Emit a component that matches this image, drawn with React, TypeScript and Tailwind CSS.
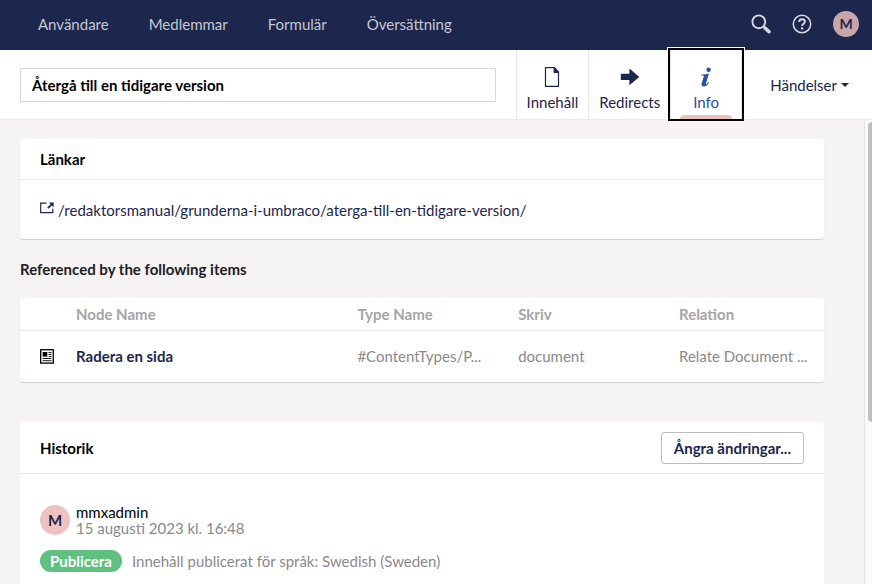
import { useState } from "react";
import clsx from "clsx";

const sections = ["Användare", "Medlemmar", "Formulär", "Översättning"];

const references = [
  {
    name: "Radera en sida",
    type: "#ContentTypes/P...",
    kind: "document",
    relation: "Relate Document ...",
  },
];

function DocumentIcon() {
  return (
    <svg viewBox="0 0 16 20" className="h-5 w-4" fill="none" aria-hidden="true">
      <path d="M1.5 0.7H10.5L14.5 5V19.3H1.5Z" stroke="currentColor" strokeWidth="1.2" />
      <path d="M9.6 0.7H10.5L14.5 5V6H9.6Z" fill="currentColor" />
    </svg>
  );
}

function ArrowIcon() {
  return (
    <svg viewBox="0 0 20 20" className="h-5 w-5" fill="currentColor" aria-hidden="true">
      <path d="M0.8 6.8H9.4V1.6L19.3 9.9L9.4 18.2V13H0.8Z" />
    </svg>
  );
}

function InfoIcon() {
  return (
    <svg viewBox="0 0 12 20" className="h-5 w-3" fill="currentColor" aria-hidden="true">
      <circle cx="8.6" cy="2.8" r="2.2" />
      <path d="M1.4 7.6C4.2 7.5 6.2 7.2 9 6.6L6 16.2C5.6 17.5 6.1 17.6 6.8 17C7.4 16.5 7.9 15.8 8.4 15L9.1 15.4C7.6 18 6 19.4 3.8 19.4C1.8 19.4 1.1 18.2 1.6 16.5L3.8 9.6C4.1 8.6 3.6 8.4 1.4 8.4Z" />
    </svg>
  );
}

function SearchIcon() {
  return (
    <svg viewBox="0 0 20 20" className="h-5 w-5" fill="none" stroke="currentColor" aria-hidden="true">
      <circle cx="7.8" cy="7.8" r="6.4" strokeWidth="1.9" />
      <path d="M12.4 12.4L14 14" strokeWidth="2" />
      <path d="M14 14L18 17.8" strokeWidth="3.4" strokeLinecap="round" />
    </svg>
  );
}

function HelpIcon() {
  return (
    <svg viewBox="0 0 20 20" className="h-5 w-5" fill="none" stroke="currentColor" aria-hidden="true">
      <circle cx="10" cy="10" r="8.7" strokeWidth="1.5" />
      <path
        d="M7.2 8C7.2 6.1 8.4 5.2 10 5.2C11.7 5.2 12.9 6.1 12.9 7.6C12.9 9.7 10.1 9.7 10.1 12.1"
        strokeWidth="1.9"
      />
      <circle cx="10.1" cy="14.4" r="1.2" fill="currentColor" stroke="none" />
    </svg>
  );
}

function OutIcon() {
  return (
    <svg viewBox="0 0 14 12" className="h-3 w-3.5" fill="none" stroke="currentColor" aria-hidden="true">
      <path d="M6.5 1.2H0.7V10.6H12.8V6.8" strokeWidth="1.2" />
      <path d="M7.8 6.2L11.6 2.6" strokeWidth="1.8" />
      <path d="M8.8 0.6H13.6V5.2Z" fill="currentColor" stroke="none" />
    </svg>
  );
}

function NewspaperIcon() {
  return (
    <svg viewBox="0 0 14 15" className="h-[15px] w-3.5" fill="none" stroke="#000" aria-hidden="true">
      <rect x="0.7" y="0.7" width="12.6" height="13.4" strokeWidth="1.3" />
      <rect x="2.7" y="3" width="4.6" height="4.6" fill="#000" stroke="none" />
      <path d="M8.6 3.5H11.5M8.6 5.5H11.5M8.6 7.5H11.5M2.7 9.5H11.5M2.7 11.7H11.5" strokeWidth="0.9" />
    </svg>
  );
}

const tabs = [
  { id: "content", label: "Innehåll", icon: DocumentIcon },
  { id: "redirects", label: "Redirects", icon: ArrowIcon },
  { id: "info", label: "Info", icon: InfoIcon },
];

export default function App() {
  const [activeTab, setActiveTab] = useState("info");
  const [name, setName] = useState("Återgå till en tidigare version");

  return (
    <div className="flex h-screen flex-col overflow-hidden bg-[#f5f3f4] font-['Lato',sans-serif] text-[15px] leading-5 text-[#1d264c]">
      {/* Top bar */}
      <header className="flex h-[50px] shrink-0 items-center justify-between bg-[#1d264c] pr-[13px] pl-[38px]">
        <nav className="flex gap-10 pb-[3px]">
          {sections.map((section) => (
            <a key={section} href="#" className="text-[#c6c8d3]">
              {section}
            </a>
          ))}
        </nav>
        <div className="flex items-center gap-[21px] pb-[3px] text-[#d8d9df]">
          <button type="button" aria-label="Sök">
            <SearchIcon />
          </button>
          <button type="button" aria-label="Hjälp">
            <HelpIcon />
          </button>
          <button
            type="button"
            className="h-[26px] w-[26px] rounded-full bg-[#c7a6a9] text-sm font-bold text-[#1d264c]"
          >
            M
          </button>
        </div>
      </header>

      {/* Editor header */}
      <div className="flex h-[70px] shrink-0 items-stretch border-b border-[#e9e9eb] bg-white pl-5">
        <div className="flex flex-1 items-center pr-5">
          <input
            aria-label="Namn"
            value={name}
            onChange={(e) => setName(e.target.value)}
            className="h-[34px] w-full border border-[#d8d7d9] px-[11px] font-bold text-black outline-none"
          />
        </div>
        <div className="flex">
          {tabs.map(({ id, label, icon: Icon }) => (
            <button
              key={id}
              type="button"
              onClick={() => setActiveTab(id)}
              className={clsx(
                "relative flex flex-col items-center gap-[5px] border-l border-[#e9e9eb] pt-[17px]",
                id === activeTab
                  ? "z-10 w-[72px] border-r text-[#2b50a0] shadow-[0_0_0_3px_#fff] outline-2 outline-black"
                  : "px-[10px]",
              )}
            >
              <Icon />
              <span>{label}</span>
              {id === activeTab && (
                <span className="absolute inset-x-[9px] bottom-0 h-1 rounded-t bg-[#ecc1bd]" />
              )}
            </button>
          ))}
        </div>
        <button type="button" className="flex items-center gap-1 pr-[23px] pl-7">
          Händelser
          <span className="border-x-4 border-t-4 border-x-transparent border-t-[#1d264c]" />
        </button>
      </div>

      <div className="flex min-h-0 flex-1">
        <main className="min-w-0 flex-1 overflow-hidden pt-[19px] pr-10 pl-5">
          <section className="rounded-[3px] bg-white shadow-[0_1px_1px_rgba(0,0,0,0.16)]">
            <h2 className="border-b border-[#e9e9eb] px-5 py-[10px] font-bold text-black">Länkar</h2>
            <div className="px-5 pt-5 pb-[19px]">
              <a href="#" className="flex items-center gap-1">
                <span className="pb-1">
                  <OutIcon />
                </span>
                /redaktorsmanual/grunderna-i-umbraco/aterga-till-en-tidigare-version/
              </a>
            </div>
          </section>

          <h2 className="mt-5 mb-[19px] font-bold text-[#202023]">Referenced by the following items</h2>

          <table className="w-full table-fixed rounded-[3px] bg-white text-left text-[#8a898c] shadow-[0_1px_1px_rgba(0,0,0,0.16)]">
            <thead>
              <tr className="h-8 border-b border-[#e9e9eb] text-[#a5a4a7]">
                <th className="w-14" />
                <th className="w-[35%]">Node Name</th>
                <th className="w-[20%]">Type Name</th>
                <th className="w-[20%]">Skriv</th>
                <th>Relation</th>
              </tr>
            </thead>
            <tbody>
              {references.map((item) => (
                <tr key={item.name} className="h-[52px]">
                  <td className="pl-5">
                    <NewspaperIcon />
                  </td>
                  <td>
                    <a href="#" className="font-bold text-[#1d264c]">
                      {item.name}
                    </a>
                  </td>
                  <td className="truncate">{item.type}</td>
                  <td>{item.kind}</td>
                  <td className="truncate">{item.relation}</td>
                </tr>
              ))}
            </tbody>
          </table>

          <section className="mt-10 rounded-[3px] bg-white pb-10">
            <div className="flex items-center justify-between border-b border-[#e9e9eb] px-5 pt-[10px] pb-[9px]">
              <h2 className="font-bold text-black">Historik</h2>
              <button
                type="button"
                className="h-8 rounded-[3px] border border-[#bcbbc0] px-3 font-bold"
              >
                Ångra ändringar...
              </button>
            </div>
            <div className="px-5 pt-[30px]">
              <div className="flex items-center gap-[6px]">
                <span className="flex h-[30px] w-[30px] items-center justify-center rounded-full bg-[#eec3bf] font-bold">
                  M
                </span>
                <div className="leading-4">
                  <div className="text-black">mmxadmin</div>
                  <div className="text-[#8a898c]">15 augusti 2023 kl. 16:48</div>
                </div>
              </div>
              <div className="mt-[14px] flex items-center gap-[10px] text-[#8a898c]">
                <span className="rounded-full bg-[#5fc080] px-[10px] py-px font-bold text-white">
                  Publicera
                </span>
                Innehåll publicerat för språk: Swedish (Sweden)
              </div>
            </div>
          </section>
        </main>

        {/* Scroll track */}
        <div className="w-2 shrink-0 border-l border-[#e4e3e5] bg-[#fafafa] pt-0.5 pl-[3px]">
          <div className="h-[65%] rounded-l bg-[#c1c1c1]" />
        </div>
      </div>
    </div>
  );
}
